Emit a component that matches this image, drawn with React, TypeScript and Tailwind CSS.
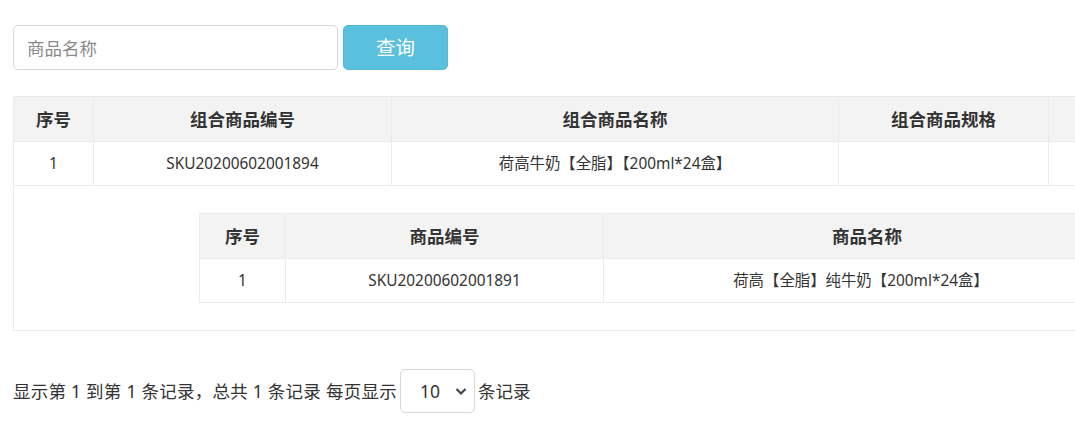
import React from "react";

const font = { fontFamily: '"Noto Sans", "Noto Sans CJK SC", sans-serif' };

export default function App() {
  return (
    <div
      className="w-[1075px] h-[448px] overflow-hidden bg-white text-[#333]"
      style={font}
    >
      {/* search bar */}
      <div className="flex items-center gap-[5px] pl-[13px] pt-[25px]">
        <input
          className="w-[325px] h-[45px] rounded-[5px] border border-[#d6d6d6] px-[13px] text-[17.5px] placeholder:text-[#8a8a8a] outline-none"
          placeholder="商品名称"
        />
        <button
          type="button"
          className="w-[105px] h-[45px] rounded-[5px] border border-[#4fb9d9] bg-[#5bc0de] text-[19.5px] text-white"
        >
          查询
        </button>
      </div>

      {/* main table */}
      <div className="ml-[13px] mt-[26px] w-[1300px]">
        <table className="w-full table-fixed border-collapse">
          <colgroup>
            <col className="w-[80px]" />
            <col className="w-[298px]" />
            <col className="w-[447px]" />
            <col className="w-[210px]" />
            <col />
          </colgroup>
          <thead>
            <tr className="h-[45px] bg-[#f3f3f3] text-[17.5px] font-bold">
              <th className="border border-[#ebebeb]">序号</th>
              <th className="border border-[#ebebeb]">组合商品编号</th>
              <th className="border border-[#ebebeb]">组合商品名称</th>
              <th className="border border-[#ebebeb]">组合商品规格</th>
              <th className="border border-[#ebebeb]"></th>
            </tr>
          </thead>
          <tbody>
            <tr className="h-[44px] text-[15.4px] text-center">
              <td className="border border-[#ebebeb]">1</td>
              <td className="border border-[#ebebeb]">SKU20200602001894</td>
              <td className="border border-[#ebebeb]">荷高牛奶【全脂】【200ml*24盒】</td>
              <td className="border border-[#ebebeb]"></td>
              <td className="border border-[#ebebeb]"></td>
            </tr>
            <tr>
              <td colSpan={5} className="border border-[#ebebeb] pl-[185px] py-[27px]">
                <table className="w-[1100px] table-fixed border-collapse">
                  <colgroup>
                    <col className="w-[86px]" />
                    <col className="w-[318px]" />
                    <col />
                  </colgroup>
                  <thead>
                    <tr className="h-[45px] bg-[#f3f3f3] text-[17.5px] font-bold">
                      <th className="border border-[#ebebeb]">序号</th>
                      <th className="border border-[#ebebeb]">商品编号</th>
                      <th className="border border-[#ebebeb] pr-[168px]">商品名称</th>
                    </tr>
                  </thead>
                  <tbody>
                    <tr className="h-[44px] text-[15.4px] text-center">
                      <td className="border border-[#ebebeb]">1</td>
                      <td className="border border-[#ebebeb]">SKU20200602001891</td>
                      <td className="border border-[#ebebeb] pr-[180px]">
                        荷高【全脂】纯牛奶【200ml*24盒】
                      </td>
                    </tr>
                  </tbody>
                </table>
              </td>
            </tr>
          </tbody>
        </table>
      </div>

      {/* pagination */}
      <div className="flex items-center gap-[3px] pl-[13px] mt-[38px] text-[17.5px]">
        <span className="tracking-[0.25px]">显示第 1 到第 1 条记录，总共 1 条记录 每页显示</span>
        <div className="relative w-[75px] h-[44px] rounded-[5px] border border-[#d9d9d9] flex items-center">
          <span className="pl-[19px]">10</span>
          <svg
            className="absolute right-[7px] top-[17px]"
            width="12"
            height="9"
            viewBox="0 0 12 9"
            fill="none"
            stroke="#444"
            strokeWidth="2.2"
          >
            <path d="M1.5 2 L6 6.5 L10.5 2" />
          </svg>
        </div>
        <span>条记录</span>
      </div>
    </div>
  );
}
